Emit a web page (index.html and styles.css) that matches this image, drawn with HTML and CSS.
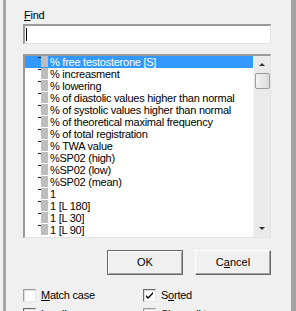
FILE: index.html
```html
<!DOCTYPE html>
<html lang="en">
<head>
    <meta charset="UTF-8">
    <title>Find term</title>
    <link rel="stylesheet" href="styles.css">
</head>
<body>
<div class="window">
    <div class="dialog">
        <div class="find-label"><u>F</u>ind</div>
        <div class="find-input"><span class="caret"></span></div>

        <div class="term-list">
            <ul class="terms">
                <li class="term selected"><span class="term-icon"></span>% free testosterone [S]</li>
                <li class="term"><span class="term-icon"></span>% increasment</li>
                <li class="term"><span class="term-icon"></span>% lowering</li>
                <li class="term"><span class="term-icon"></span>% of diastolic values higher than normal</li>
                <li class="term"><span class="term-icon"></span>% of systolic values higher than normal</li>
                <li class="term"><span class="term-icon"></span>% of theoretical maximal frequency</li>
                <li class="term"><span class="term-icon"></span>% of total registration</li>
                <li class="term"><span class="term-icon"></span>% TWA value</li>
                <li class="term"><span class="term-icon"></span>%SP02 (high)</li>
                <li class="term"><span class="term-icon"></span>%SP02 (low)</li>
                <li class="term"><span class="term-icon"></span>%SP02 (mean)</li>
                <li class="term"><span class="term-icon"></span>1</li>
                <li class="term"><span class="term-icon"></span>1 [L 180]</li>
                <li class="term"><span class="term-icon"></span>1 [L 30]</li>
                <li class="term"><span class="term-icon"></span>1 [L 90]</li>
            </ul>
            <div class="scrollbar">
                <span class="arrow arrow-up"></span>
                <span class="thumb"></span>
                <span class="track"></span>
                <span class="arrow arrow-down"></span>
            </div>
        </div>

        <div class="buttons">
            <div class="btn btn-default">OK</div>
            <div class="btn">C<u>a</u>ncel</div>
        </div>

        <div class="options">
            <div class="option"><span class="check"></span><u>M</u>atch case</div>
            <div class="option"><span class="check checked"></span>S<u>o</u>rted</div>
            <div class="option"><span class="check checked"></span><u>L</u>oading</div>
            <div class="option"><span class="check"></span>S<u>h</u>ow all terms</div>
        </div>
    </div>
</div>
</body>
</html>
```

FILE: styles.css
```css
*{
    margin:0;
    padding:0;
    box-sizing: border-box;
}
body{
    width:296px;
    height:311px;
    overflow: hidden;
    background-color: #f0f0f0;
    font-family: "Liberation Sans", Arial, sans-serif;
    font-size:11px;
    letter-spacing: -0.25px;
    color:#000;
}
.window{
    height:311px;
    margin-left:3px;
    border-left:3px solid #a7a7a7;
    border-right:5px solid #a3a3a3;
}
.dialog{
    display: flex;
    flex-direction: column;
    padding:9px 20px 0 17px;
}
.find-label{
    line-height:13px;
    padding-left:1px;
}
.find-input{
    margin-top:2px;
    height:20px;
    background-color: #fff;
    border-top:2px solid #9a9a9a;
    border-left:2px solid #9a9a9a;
    border-right:1px solid #e2e2e2;
    border-bottom:1px solid #e2e2e2;
    padding:2px 0 0 1px;
}
.caret{
    display: block;
    width:1px;
    height:13px;
    background-color: #000;
}

/* term list */
.term-list{
    margin-top:10px;
    height:184px;
    display: flex;
    background-color: #fff;
    border-top:2px solid #9a9a9a;
    border-left:2px solid #9a9a9a;
    border-right:1px solid #e2e2e2;
    border-bottom:1px solid #e2e2e2;
}
.terms{
    flex:1;
    list-style: none;
    overflow: hidden;
}
.term{
    display: flex;
    height:12px;
    line-height:12px;
    padding-left:13px;
    white-space: nowrap;
}
.term.selected{
    background-color: #3399ff;
    color:#fff;
}
.term-icon{
    flex:none;
    width:10px;
    height:11px;
    margin-top:0;
    margin-right:2px;
    background:
        linear-gradient(#1a1a1a,#1a1a1a) 0 1px / 3px 1px no-repeat,
        linear-gradient(#bdbdbd,#bdbdbd) 3px 0 / 7px 100% no-repeat;
}
.scrollbar{
    flex:none;
    width:17px;
    display: flex;
    flex-direction: column;
    align-items: center;
    background-color: #eaeaea;
    border-left:1px solid #f4f4f4;
}
.arrow{
    flex:none;
    width:17px;
    height:17px;
    display: flex;
    align-items: center;
    justify-content: center;
}
.arrow::after{
    content:"";
    border-left:3px solid transparent;
    border-right:3px solid transparent;
}
.arrow-up::after{
    border-bottom:3px solid #333;
}
.arrow-down::after{
    border-top:3px solid #333;
}
.thumb{
    flex:none;
    width:15px;
    height:16px;
    border:1px solid #9c9c9c;
    border-radius:2px;
    background: linear-gradient(to right, #f2f2f2, #dcdcdc);
}
.track{
    flex:1;
}

/* buttons */
.buttons{
    margin-top:12px;
    display: flex;
    justify-content: flex-end;
    gap:12px;
}
.btn{
    width:76px;
    height:25px;
    line-height:23px;
    text-align: center;
    border:1px solid;
    border-color:#fff #686868 #686868 #fff;
    box-shadow: inset -1px -1px #a0a0a0;
    background-color: #f0f0f0;
    letter-spacing: 0;
}
.btn-default{
    border-color:#686868;
    box-shadow: inset 1px 1px #fff, inset -1px -1px #a0a0a0;
}

/* options */
.options{
    margin-top:12px;
    display: grid;
    grid-template-columns: 120px 1fr;
    row-gap:4px;
}
.option{
    display: flex;
    align-items: center;
    height:13px;
    line-height:13px;
    margin-top:2px;
}
.check{
    flex:none;
    width:13px;
    height:13px;
    margin-right:5px;
    background-color: #fff;
    border:1px solid;
    border-color:#a0a0a0 #e6e6e6 #e6e6e6 #a0a0a0;
    box-shadow: inset 1px 1px #dcdcdc;
}
.check.checked{
    border-color:#6a6a6a #e6e6e6 #e6e6e6 #6a6a6a;
    background:
        url("data:image/svg+xml,%3Csvg xmlns='http://www.w3.org/2000/svg' width='11' height='11'%3E%3Cpath d='M2 5l2 2 5-5v2l-5 5-2-2z' fill='%23000'/%3E%3C/svg%3E") center / 11px 11px no-repeat,
        #fff;
}
```
